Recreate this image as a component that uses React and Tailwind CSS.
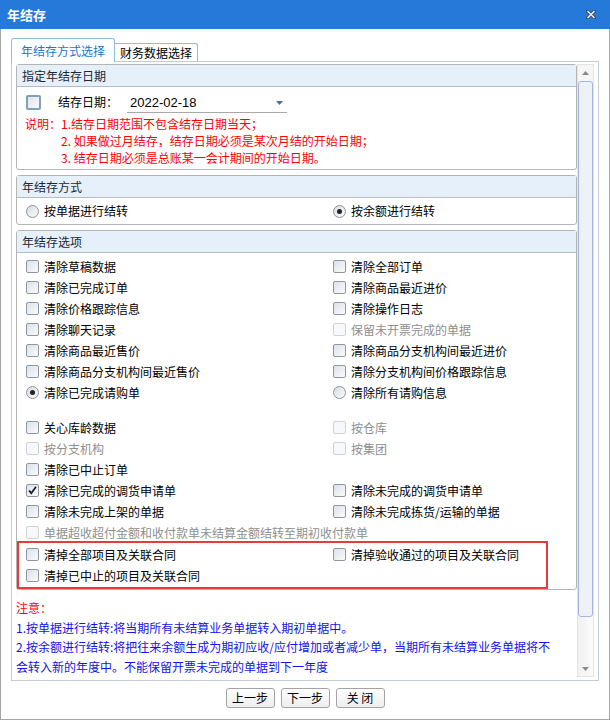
function Box({ checked, disabled, big }) {
  if (big) {
    return (
      <span className="w-[15px] h-[15px] shrink-0 border-2 border-[#7fa2b4] rounded-[2px] bg-linear-to-br from-[#dfe5ec] to-[#f9fafb]" />
    );
  }
  return (
    <span
      className={
        disabled
          ? "w-[13px] h-[13px] shrink-0 border border-[#cfd3d8] rounded-[2px] bg-[#f7f8fa]"
          : "w-[13px] h-[13px] shrink-0 border border-[#8c97a3] rounded-[2px] bg-linear-to-br from-[#dce2e9] to-[#fafbfc] flex items-center justify-center"
      }
    >
      {checked && (
        <svg width="11" height="11" viewBox="0 0 11 11">
          <path d="M2 5.5 L4.3 8.2 L9 1.8" fill="none" stroke="#222" strokeWidth="1.8" />
        </svg>
      )}
    </span>
  );
}

function Radio({ checked }) {
  return (
    <span className="w-[13px] h-[13px] shrink-0 rounded-full border border-[#8d9399] bg-linear-to-br from-[#d8dde3] to-[#fbfbfc] flex items-center justify-center">
      {checked && <span className="w-[5px] h-[5px] rounded-full bg-[#222]" />}
    </span>
  );
}

function Opt({ label, type = "check", checked, disabled }) {
  return (
    <div className="flex items-center gap-[5px] h-[21px] whitespace-nowrap">
      {type === "radio" ? <Radio checked={checked} /> : <Box checked={checked} disabled={disabled} />}
      <span className={disabled ? "text-[#8e8e8e]" : "text-black"}>{label}</span>
    </div>
  );
}

function Group({ title, children }) {
  return (
    <div className="border border-[#b5b5b5] rounded-[3px]">
      <div className="h-[22px] bg-[#e6f0fa] border-b border-[#b4bcc6] flex items-center pl-[5px] text-[#1a2734]">
        {title}
      </div>
      {children}
    </div>
  );
}

const rowsA = [
  [["清除草稿数据"], ["清除全部订单"]],
  [["清除已完成订单"], ["清除商品最近进价"]],
  [["清除价格跟踪信息"], ["清除操作日志"]],
  [["清除聊天记录"], ["保留未开票完成的单据", "check", false, true]],
  [["清除商品最近售价"], ["清除商品分支机构间最近进价"]],
  [["清除商品分支机构间最近售价"], ["清除分支机构间价格跟踪信息"]],
  [["清除已完成请购单", "radio", true], ["清除所有请购信息", "radio"]],
];

const rowsB = [
  [["关心库龄数据"], ["按仓库", "check", false, true]],
  [["按分支机构", "check", false, true], ["按集团", "check", false, true]],
  [["清除已中止订单"], null],
  [["清除已完成的调货申请单", "check", true], ["清除未完成的调货申请单"]],
  [["清除未完成上架的单据"], ["清除未完成拣货/运输的单据"]],
];

function Row({ row }) {
  return (
    <div className="grid grid-cols-[307px_1fr]">
      {row.map((o, i) =>
        o ? <Opt key={i} label={o[0]} type={o[1]} checked={o[2]} disabled={o[3]} /> : <div key={i} />
      )}
    </div>
  );
}

export default function App() {
  return (
    <div className="w-[610px] h-[720px] flex flex-col bg-white text-[12px] leading-none font-['Noto_Sans_CJK_SC','Liberation_Sans',sans-serif]">
      <div className="h-[29px] shrink-0 bg-[#2479d9] flex items-center justify-between pl-[7px] pr-[14px]">
        <span className="text-white font-bold text-[13px]">年结存</span>
        <svg width="10" height="9" viewBox="0 0 10 9">
          <path d="M1.5 1 L8.5 8 M8.5 1 L1.5 8" stroke="#3c4a5a" strokeWidth="3.2" strokeLinecap="square" />
          <path d="M1.5 1 L8.5 8 M8.5 1 L1.5 8" stroke="#e4ebf2" strokeWidth="1.6" />
        </svg>
      </div>

      <div className="flex-1 flex flex-col border-x border-b border-[#a6a6a6]">
        <div className="flex items-end pl-[10px] mt-[9px]">
          <div className="h-[24px] px-[9px] flex items-center bg-white border border-b-0 border-[#8fbcd9] rounded-t-[3px] text-[#2277cc] relative z-10 -mb-px">
            年结存方式选择
          </div>
          <div className="h-[18px] px-[5px] flex items-center bg-white border border-b-0 border-l-0 border-[#8fbcd9] rounded-tr-[3px] text-black">
            财务数据选择
          </div>
        </div>

        <div className="ml-[10px] w-[588px] h-[620px] border border-[#c4cdd6] flex pt-[2px] pl-[4px]">
          <div className="w-[561px] h-[613px] overflow-hidden">
            <Group title="指定年结存日期">
              <div className="pt-[7px] pb-[3px]">
                <div className="flex items-center h-[16px] pl-[9px]">
                  <Box big />
                  <span className="ml-[17px]">结存日期：</span>
                  <div className="ml-[9px] w-[160px] h-[20px] border-b border-[#a9a9a9] flex items-center justify-between pl-[3px] pr-[4px] mt-[2px]">
                    <span className="text-[13px] font-['Liberation_Sans',sans-serif]">2022-02-18</span>
                    <svg width="7" height="4" viewBox="0 0 7 4">
                      <path d="M0 0 H7 L3.5 4 Z" fill="#4d6f9c" />
                    </svg>
                  </div>
                </div>
                <div className="mt-[5px] pl-[8px] text-[#ff0000] leading-[17px] whitespace-nowrap">
                  <div>说明：1.结存日期范围不包含结存日期当天；</div>
                  <div className="pl-[36px]">2. 如果做过月结存，结存日期必须是某次月结的开始日期；</div>
                  <div className="pl-[36px]">3. 结存日期必须是总账某一会计期间的开始日期。</div>
                </div>
              </div>
            </Group>

            <div className="mt-[5px]">
              <Group title="年结存方式">
                <div className="grid grid-cols-[307px_1fr] pl-[9px] h-[26px] items-center">
                  <div className="flex items-center gap-[5px]">
                    <Radio />
                    <span>按单据进行结转</span>
                  </div>
                  <div className="flex items-center gap-[5px]">
                    <Radio checked />
                    <span>按余额进行结转</span>
                  </div>
                </div>
              </Group>
            </div>

            <div className="mt-[5px]">
              <Group title="年结存选项">
                <div className="pt-[3px] pl-[9px]">
                  {rowsA.map((r, i) => (
                    <Row key={i} row={r} />
                  ))}
                  <div className="h-[14px]" />
                  {rowsB.map((r, i) => (
                    <Row key={i} row={r} />
                  ))}
                  <Opt label="单据超收超付金额和收付款单未结算金额结转至期初收付款单" disabled />
                </div>
                <div className="-mt-[2px] w-[531px] border-2 border-[#ec3a3a] pl-[7px] py-px">
                  <Row row={[["清掉全部项目及关联合同"], ["清掉验收通过的项目及关联合同"]]} />
                  <Row row={[["清掉已中止的项目及关联合同"], null]} />
                </div>
              </Group>
            </div>

            <div className="mt-[8px] leading-[19.5px] whitespace-nowrap">
              <div className="text-[#ff0000]">注意：</div>
              <div className="text-[#1212ee]">1.按单据进行结转:将当期所有未结算业务单据转入期初单据中。</div>
              <div className="text-[#1212ee]">
                2.按余额进行结转:将把往来余额生成为期初应收/应付增加或者减少单，当期所有未结算业务单据将不
                <br />
                会转入新的年度中。不能保留开票未完成的单据到下一年度
              </div>
              <div className="text-[#ff0000]">3.年结存后，系统自动将往来期初数据结转至新的会计年度。</div>
            </div>
          </div>

          <div className="w-[17px] h-[613px] bg-[#f6f6f6] border border-[#e4e4e4] flex flex-col">
            <div className="h-[16px] flex items-center justify-center">
              <svg width="7" height="4" viewBox="0 0 7 4">
                <path d="M3.5 0 L7 4 H0 Z" fill="#8a8a8a" />
              </svg>
            </div>
            <div className="h-[536px] border border-[#a5b5de] rounded-[3px] bg-[#eef1f6]" />
            <div className="flex-1 bg-linear-to-r from-[#f1f1f1] to-[#fbfbfb] flex items-end justify-center pb-[5px]">
              <svg width="7" height="4" viewBox="0 0 7 4">
                <path d="M0 0 H7 L3.5 4 Z" fill="#8a8a8a" />
              </svg>
            </div>
          </div>
        </div>

        <div className="flex justify-center gap-[6px] mt-[7px]">
          {["上一步", "下一步", "关 闭"].map((t) => (
            <button
              key={t}
              className="w-[49px] h-[20px] border border-[#a3a3a3] rounded-[3px] bg-linear-to-b from-white to-[#eeeeee] text-black text-[12px]"
            >
              {t}
            </button>
          ))}
        </div>
      </div>
    </div>
  );
}
